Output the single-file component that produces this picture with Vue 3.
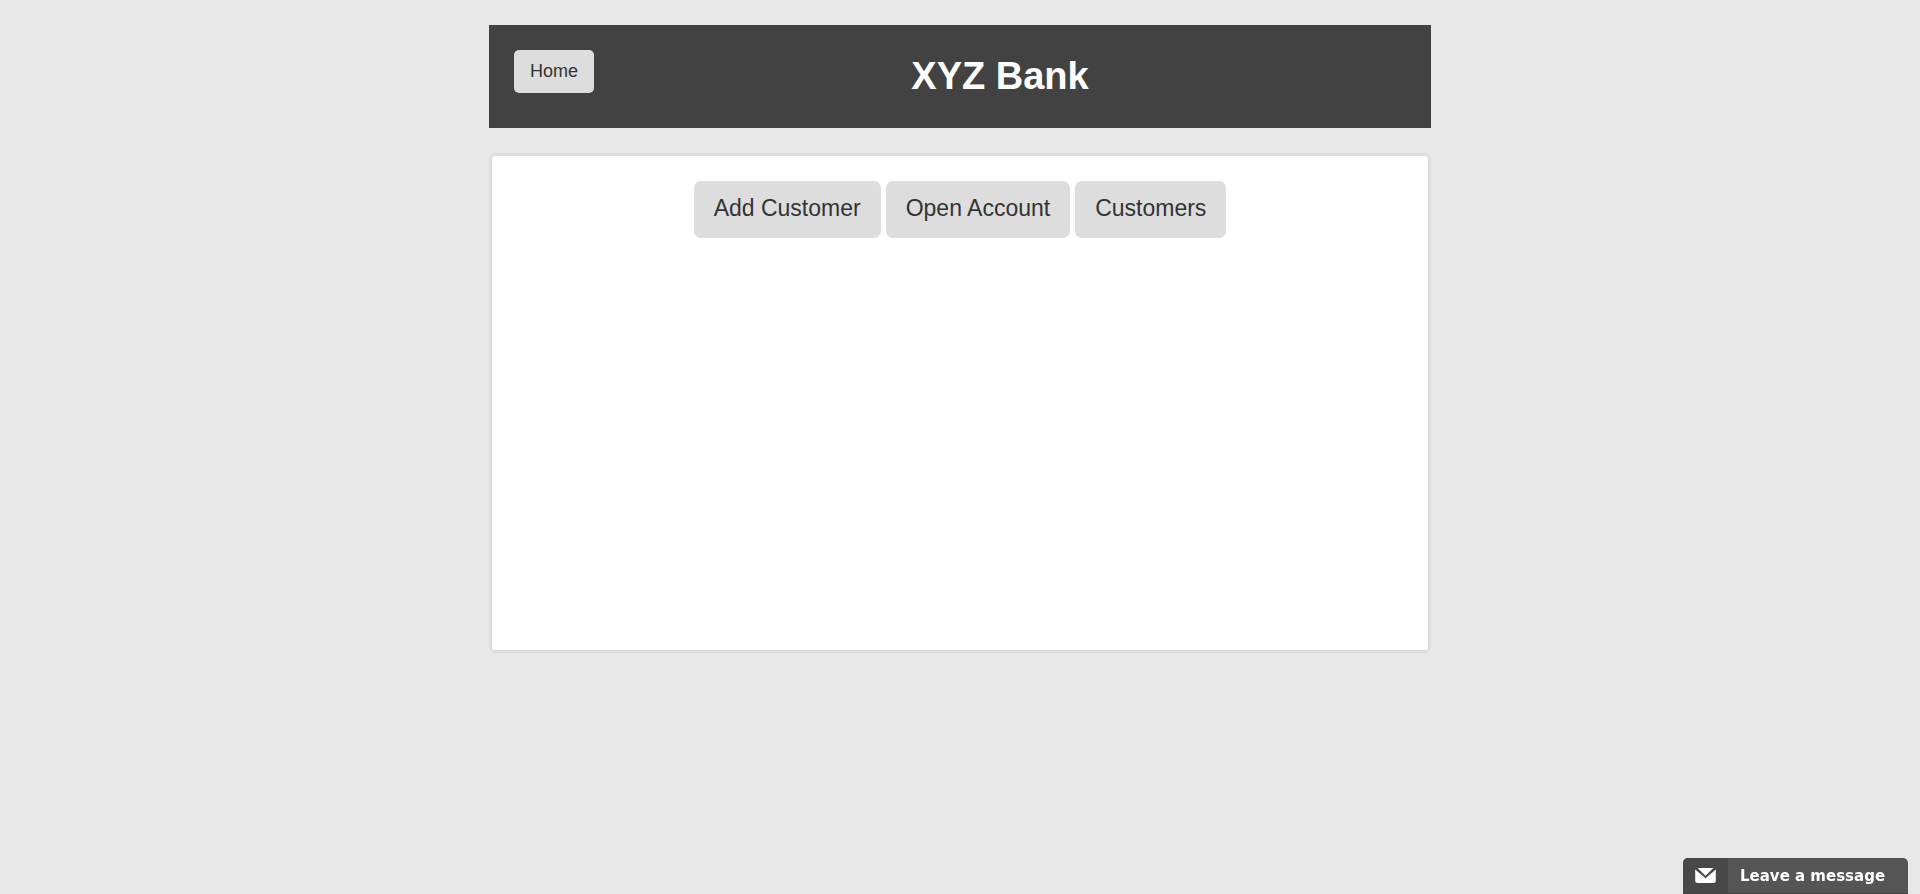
<script setup>
const actions = ['Add Customer', 'Open Account', 'Customers']
</script>

<template>
  <div class="page">
    <header class="bar">
      <button type="button" class="btn home">Home</button>
      <h1 class="title">XYZ Bank</h1>
    </header>
    <main class="panel">
      <button v-for="label in actions" :key="label" type="button" class="btn action">{{ label }}</button>
    </main>
    <button type="button" class="chat">
      <span class="chat-icon">
        <svg width="21" height="15" viewBox="0 0 21 15" aria-hidden="true">
          <path d="M2.6 0H18.4L10.5 7.8Z" fill="#fff" />
          <path d="M0.2 1.4L10.5 10.2L20.8 1.4V12.5Q20.8 15 18.3 15H2.7Q0.2 15 0.2 12.5Z" fill="#fff" />
        </svg>
      </span>
      <span class="chat-label">Leave a message</span>
    </button>
  </div>
</template>

<style>
body {
  background: #e8e8e8;
}
</style>

<style scoped>
.page {
  max-width: 942px;
  margin: 0 auto;
  padding: 25px 0;
  font-family: "Liberation Sans", Arial, sans-serif;
  color: #333;
}
.bar {
  display: flex;
  align-items: flex-start;
  padding: 25px;
  background: #424242;
}
.btn {
  border: 0;
  background: #ddd;
  color: #333;
  font-family: inherit;
  cursor: pointer;
}
.home {
  padding: 9px 16px;
  border-radius: 5px;
  font-size: 18px;
  line-height: 25px;
}
.title {
  flex: 1;
  margin: 0;
  color: #fff;
  font-size: 38px;
  line-height: 53px;
  text-align: center;
}
.panel {
  display: flex;
  flex-wrap: wrap;
  justify-content: center;
  align-content: flex-start;
  gap: 5px;
  box-sizing: border-box;
  min-height: 500px;
  margin-top: 25px;
  padding: 25px;
  border: 3px solid #ddd;
  border-radius: 6px;
  background: #fff;
}
.action {
  padding: 11px 20px 14px;
  border-radius: 7px;
  font-size: 23px;
  line-height: 32px;
}
.chat {
  position: fixed;
  right: 12px;
  bottom: 0;
  display: flex;
  width: 225px;
  height: 36px;
  padding: 0;
  overflow: hidden;
  border: 0;
  border-bottom: 1px solid #444;
  border-radius: 5px 5px 0 0;
  background: #555;
  color: #fff;
  font: bold 15px/37px "DejaVu Sans", Verdana, sans-serif;
  cursor: pointer;
}
.chat-icon {
  display: flex;
  flex: 0 0 45px;
  align-items: center;
  justify-content: center;
  height: 35px;
  background: #484848;
}
.chat-label {
  padding-left: 12px;
}
</style>
